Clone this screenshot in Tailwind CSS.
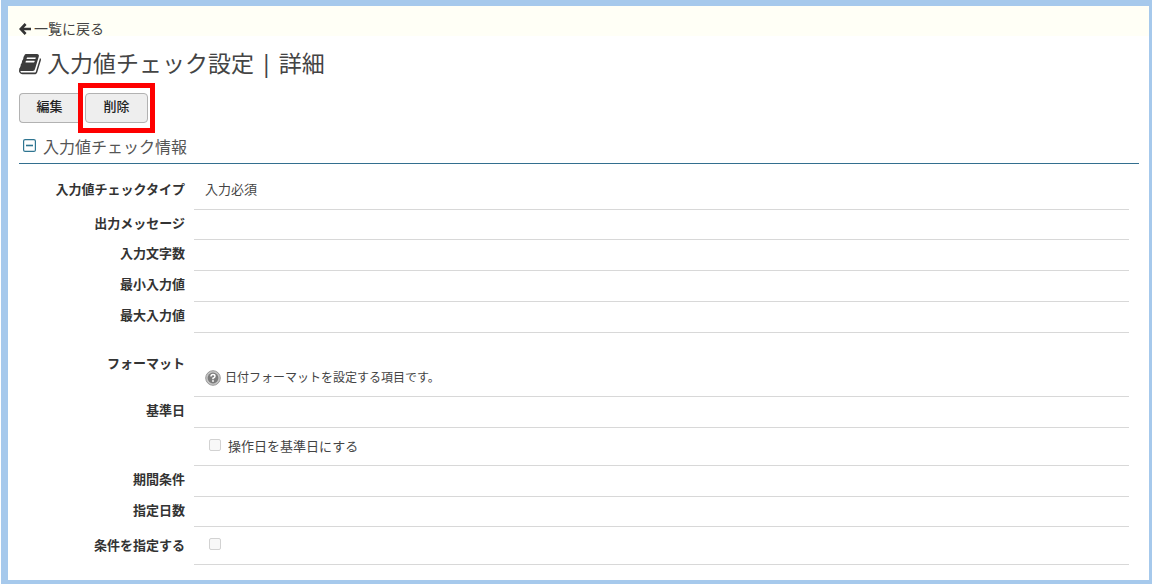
<!DOCTYPE html>
<html lang="ja">
<head>
<meta charset="utf-8">
<meta name="viewport" content="width=device-width, initial-scale=1">
<title>入力値チェック設定 | 詳細</title>
<script src="https://cdn.jsdelivr.net/npm/@tailwindcss/browser@4"></script>
</head>
<body class="min-h-screen bg-white pl-px font-['Noto_Sans_CJK_JP',sans-serif] text-[13px] leading-5 text-[#444]">
<div class="min-h-screen border-t-6 border-r-3 border-b-4 border-l-7 border-[#a6c9ec] bg-white">
  <header class="flex h-[30px] items-center bg-[#fffff6] px-[11px] pt-4">
    <a href="#" class="flex items-center gap-[3px] text-sm leading-5 text-[#444]">
      <svg class="h-3 w-3" viewBox="0 0 12 12" fill="none" stroke="#333" stroke-width="2.6" aria-hidden="true"><path d="M6.6 1 1.8 6l4.8 5M2 6h10"/></svg>
      <span class="pb-0.5">一覧に戻る</span>
    </a>
  </header>
  <main class="pr-[10px] pl-[11px]">
    <h1 class="flex h-[54px] items-center gap-[6px] pt-1 font-['Noto_Sans','Noto_Sans_CJK_JP',sans-serif] text-[23px] leading-8 text-[#444]">
      <svg class="h-[22px] w-[22px] shrink-0" viewBox="0 0 1664 1664" fill="#3c3c3c" aria-hidden="true"><path d="M1639 350q40 57 18 129l-275 906q-19 64-76.500 107.500T1183 1536H260q-77 0-148.500-53.500T12 1351q-24-67-2-127 0-4 3-27t4-37q1-8-3-21.500t-3-19.500q2-11 8-21t16.500-23.500T52 1051q23-38 45-91.500t30-91.500q3-10 .5-30t-.5-28q3-11 17-28t17-23q21-36 42-92t25-90q1-9-2.500-32t.5-28q4-13 22-30.500t22-22.500q19-26 42.500-84.500T340 283q1-8-3-25.500t-2-26.500q2-8 9-18t18-23 17-21q8-12 16.500-30.500t15-35 16-36 19.500-32T472 12t36-11.500 47.500 5.500l-1 3q38-9 51-9h761q74 0 114 56t18 130l-274 906q-36 119-71.500 153.500T1025 1280H156q-27 0-38 15-11 16-1 43 24 70 144 70h923q29 0 56-15.500t35-41.500l300-987q7-22 5-57 38 15 59 43zm-1064 2q-4 13 2 22.500t20 9.500h608q13 0 25.500-9.500T1247 352l21-64q4-13-2-22.500t-20-9.500H638q-13 0-25.500 9.500T596 288zm-83 256q-4 13 2 22.500t20 9.500h608q13 0 25.500-9.500T1164 608l21-64q4-13-2-22.500t-20-9.500H555q-13 0-25.500 9.500T513 544z"/></svg>
      <span class="pb-1">入力値チェック設定 | 詳細</span>
    </h1>
    <div class="flex h-9 items-center">
      <button type="button" class="h-[30px] w-[60px] rounded-l-sm border border-r-0 border-[#b2b2b2] bg-[#eee] pb-1 text-[13px] leading-5 font-medium text-[#222]">編集</button>
      <div class="relative ml-[6px]">
        <button type="button" class="block h-[30px] w-[63px] rounded-sm border border-[#b2b2b2] bg-[#eee] pb-1 text-[13px] leading-5 font-medium text-[#222]">削除</button>
        <div class="pointer-events-none absolute -inset-x-[7px] -inset-y-[10px] border-5 border-[#fe0000]"></div>
      </div>
    </div>
    <section>
      <h2 class="flex h-[38px] items-center gap-[7px] border-b border-[#336f8f] pt-0.5 pl-1 text-base leading-5 text-[#555]">
        <button type="button" aria-label="折りたたむ" class="block">
          <svg class="block h-[13px] w-[13px]" viewBox="0 0 13 13" fill="none" stroke="#2f7591" aria-hidden="true"><rect x=".6" y=".6" width="11.800" height="11.800" rx="1.500" stroke-width="1.200"/><path d="M3 6.500h7" stroke-width="1.600"/></svg>
        </button>
        入力値チェック情報
      </h2>
      <dl class="mr-[10px] grid grid-cols-[166px_1fr] gap-x-[9px] pt-2 [&>dd]:border-b [&>dd]:border-[#d8d8d8] [&>dd]:pl-[11px] [&>dt]:text-right [&>dt]:font-bold [&>dt]:text-[#333]">
        <dt class="pt-[7px]">入力値チェックタイプ</dt><dd class="h-[38px] pt-[7px]">入力必須</dd>
        <dt class="pt-[3px]">出力メッセージ</dt><dd class="h-[30px]"></dd>
        <dt class="pt-[3px]">入力文字数</dt><dd class="h-[31px]"></dd>
        <dt class="pt-[3px]">最小入力値</dt><dd class="h-[31px]"></dd>
        <dt class="pt-[3px]">最大入力値</dt><dd class="h-[31px]"></dd>
        <dt class="pt-5">フォーマット</dt>
        <dd class="flex h-16 items-end gap-1 pb-2 text-xs leading-5">
          <svg class="mb-0.5 h-4 w-4" viewBox="0 0 16 16" aria-hidden="true"><circle cx="8" cy="8" r="7.300" fill="#c4c4c4" stroke="#9a9a9a"/><circle cx="8" cy="8" r="5.400" fill="#7c7c7c"/><path d="M6 6.500Q6 4.500 8 4.500t2 1.700Q10 7.300 8 8.200v1" fill="none" stroke="#fff" stroke-width="1.500"/><circle cx="8" cy="11" r=".9" fill="#fff"/></svg>
          <span class="pb-px">日付フォーマットを設定する項目です。</span>
        </dd>
        <dt class="pt-[3px]">基準日</dt><dd class="h-[31px]"></dd>
        <dd class="col-start-2 flex h-[38px] items-center">
          <input id="base" type="checkbox" disabled class="mr-[7px] mb-1 ml-1 h-3 w-3 appearance-none rounded-xs border border-[#d2d2d2] bg-[#f8f8f8]">
          <label for="base" class="pb-0.5">操作日を基準日にする</label>
        </dd>
        <dt class="pt-[3px]">期間条件</dt><dd class="h-[31px]"></dd>
        <dt class="pt-[3px]">指定日数</dt><dd class="h-[30px]"></dd>
        <dt class="pt-2"><label for="condition">条件を指定する</label></dt>
        <dd class="flex h-[38px] items-center"><input id="condition" type="checkbox" disabled class="mb-1 ml-1 h-3 w-3 appearance-none rounded-xs border border-[#d2d2d2] bg-[#f8f8f8]"></dd>
      </dl>
    </section>
  </main>
</div>
</body>
</html>
